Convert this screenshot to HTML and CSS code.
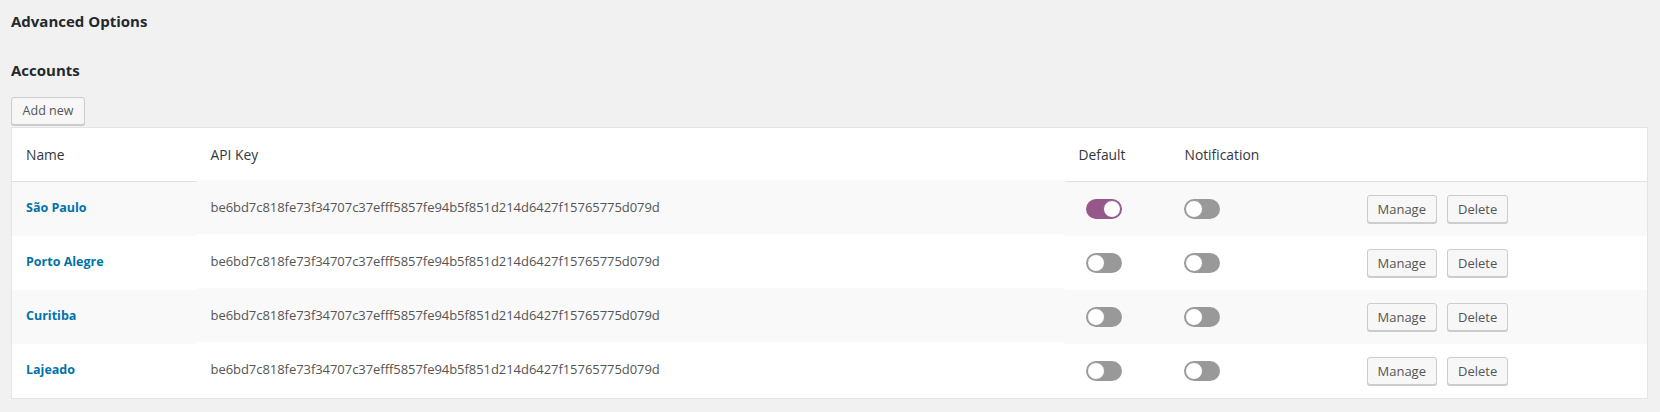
FILE: index.html
```html
<!DOCTYPE html>
<html>
<head>
<meta charset="utf-8">
<link rel="stylesheet" href="styles.css">
</head>
<body>
<div class="wrap">
  <h2 class="title">Advanced Options</h2>
  <h2 class="title accounts">Accounts</h2>
  <button class="btn add">Add new</button>
  <table class="accounts-table">
    <colgroup>
      <col class="c-name"><col class="c-key"><col class="c-def"><col class="c-notif"><col>
    </colgroup>
    <thead>
      <tr><th>Name</th><th>API Key</th><th>Default</th><th>Notification</th><th></th></tr>
    </thead>
    <tbody>
      <tr>
        <td><a class="name">São Paulo</a></td>
        <td class="key">be6bd7c818fe73f34707c37efff5857fe94b5f851d214d6427f15765775d079d</td>
        <td><span class="toggle on def"></span></td>
        <td><span class="toggle notif"></span></td>
        <td class="actions"><button class="btn">Manage</button><button class="btn">Delete</button></td>
      </tr>
      <tr>
        <td><a class="name">Porto Alegre</a></td>
        <td class="key">be6bd7c818fe73f34707c37efff5857fe94b5f851d214d6427f15765775d079d</td>
        <td><span class="toggle def"></span></td>
        <td><span class="toggle notif"></span></td>
        <td class="actions"><button class="btn">Manage</button><button class="btn">Delete</button></td>
      </tr>
      <tr>
        <td><a class="name">Curitiba</a></td>
        <td class="key">be6bd7c818fe73f34707c37efff5857fe94b5f851d214d6427f15765775d079d</td>
        <td><span class="toggle def"></span></td>
        <td><span class="toggle notif"></span></td>
        <td class="actions"><button class="btn">Manage</button><button class="btn">Delete</button></td>
      </tr>
      <tr>
        <td><a class="name">Lajeado</a></td>
        <td class="key">be6bd7c818fe73f34707c37efff5857fe94b5f851d214d6427f15765775d079d</td>
        <td><span class="toggle def"></span></td>
        <td><span class="toggle notif"></span></td>
        <td class="actions"><button class="btn">Manage</button><button class="btn">Delete</button></td>
      </tr>
    </tbody>
  </table>
</div>
</body>
</html>
```

FILE: styles.css
```css
html, body {
  margin: 0;
  padding: 0;
  background: #f1f1f1;
}
body {
  font-family: "Open Sans", "Noto Sans", sans-serif;
  font-size: 13px;
  color: #444;
}
.wrap {
  padding: 9px 12px 0 11px;
}
.title {
  margin: 0;
  font-size: 15px;
  font-weight: 700;
  color: #23282d;
  line-height: 24px;
}
.accounts {
  margin-top: 25px;
}
.btn {
  font-family: inherit;
  font-size: 12.5px;
  color: #555;
  background: #f7f7f7;
  border: 1px solid #ccc;
  border-radius: 3px;
  box-shadow: 0 1px 0 #ccc;
  height: 28px;
  padding: 0 10px;
  line-height: 26px;
  cursor: pointer;
}
.add {
  display: block;
  margin-top: 15px;
  width: 74px;
  padding: 0;
}
.accounts-table {
  margin-top: 2px;
  width: 100%;
  table-layout: fixed;
  border-collapse: collapse;
  background: #fff;
  border: 1px solid #e5e5e5;
  box-shadow: 0 1px 1px rgba(0,0,0,0.04);
}
.c-name { width: 185px; }
.c-key { width: 868px; }
.c-def { width: 106px; }
.c-notif { width: 181px; }
th {
  text-align: left;
  font-weight: 400;
  font-size: 13.8px;
  color: #32373c;
  height: 53px;
  padding: 0 0 0 14px;
  border-bottom: 1px solid #e1e1e1;
}
td {
  height: 54px;
  padding: 0 0 0 14px;
  vertical-align: middle;
}
tbody tr:nth-child(odd) td {
  background: #f9f9f9;
}
.name {
  color: #0073aa;
  font-weight: 700;
  font-size: 12.5px;
  position: relative;
  top: -2px;
}
.key {
  font-size: 13px;
  color: #555;
  letter-spacing: -0.05px;
  position: relative;
  top: -2px;
}
.toggle {
  display: inline-block;
  vertical-align: middle;
  position: relative;
  width: 36px;
  height: 20px;
  border-radius: 10px;
  background: #999;
  box-sizing: border-box;
}
.toggle::after {
  content: "";
  position: absolute;
  left: 1px;
  top: 1px;
  width: 18px;
  height: 18px;
  border-radius: 50%;
  background: #fff;
  box-sizing: border-box;
  border: 1px solid #999;
}
.toggle.on {
  background: #96588a;
}
.toggle.on::after {
  left: 17px;
  border-color: #96588a;
}
.def { margin-left: 7px; }
.notif { margin-left: -1px; }
.actions {
  padding-left: 15px;
}
.actions .btn {
  font-size: 13px;
  margin-right: 10px;
  vertical-align: middle;
  padding: 0 10px;
}
```
